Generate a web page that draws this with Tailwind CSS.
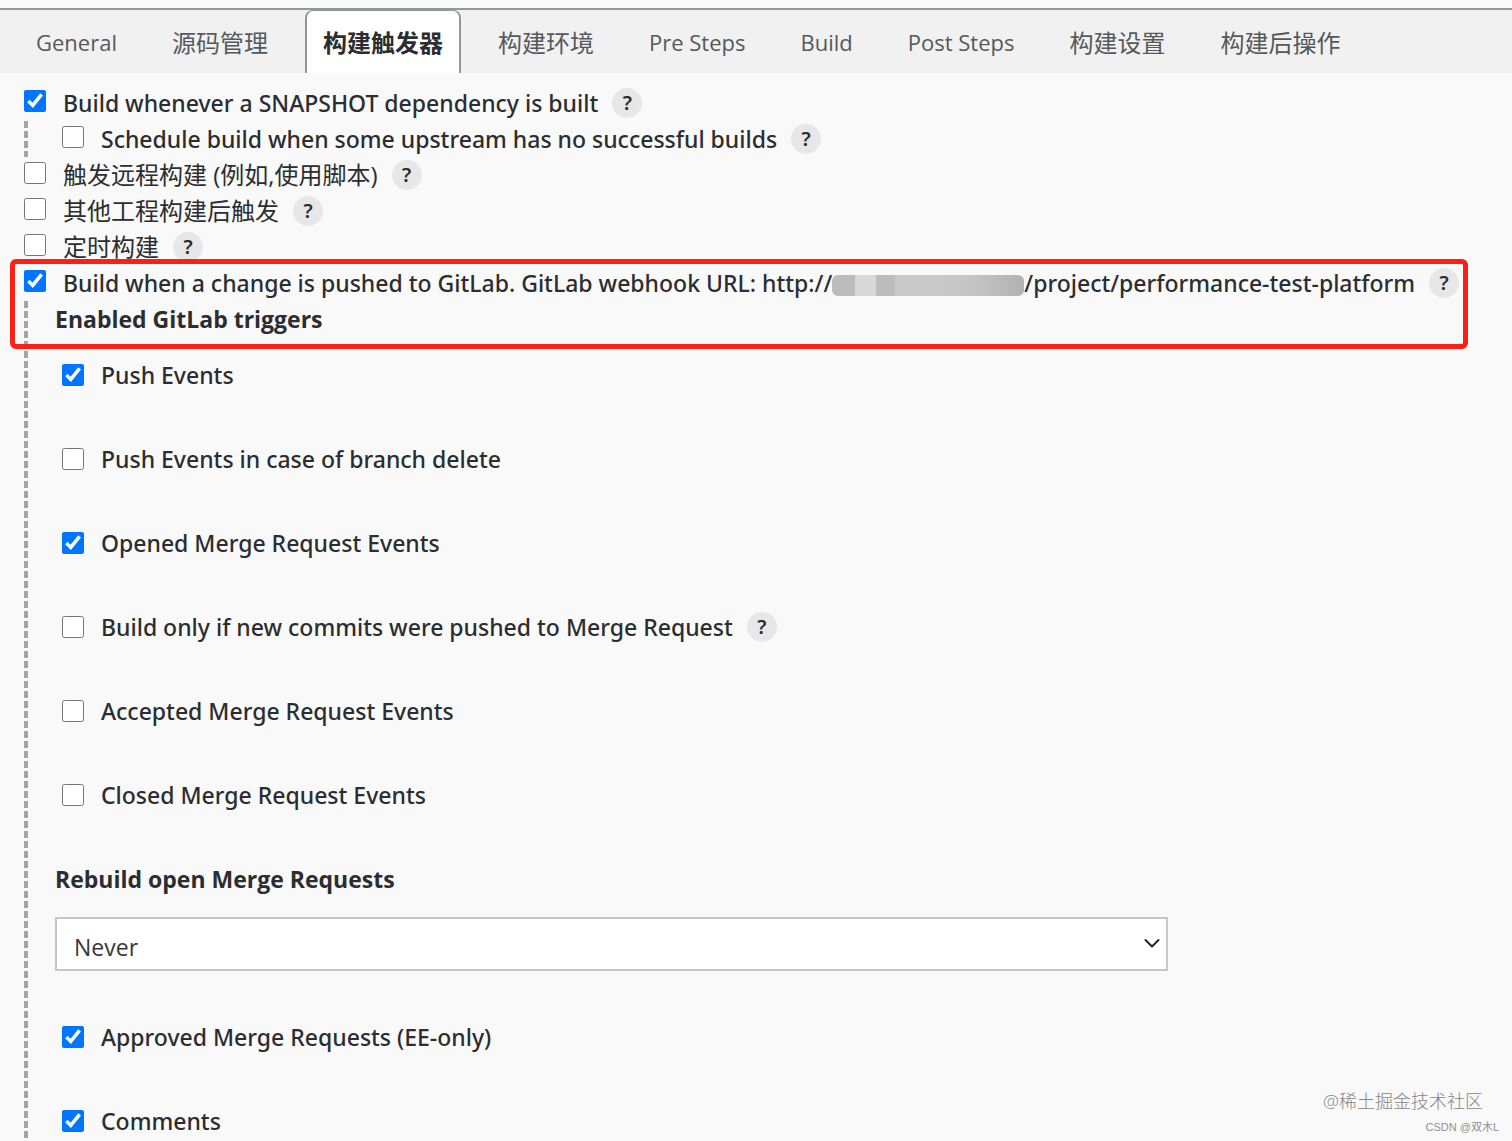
<!DOCTYPE html>
<html lang="zh-CN">
<head>
<meta charset="utf-8">
<meta name="viewport" content="width=device-width, initial-scale=1">
<title>构建触发器</title>
<script src="https://cdn.jsdelivr.net/npm/@tailwindcss/browser@4"></script>
</head>
<body class="relative min-h-screen overflow-x-hidden bg-[#f9f9f9] font-['Noto_Sans','Noto_Sans_CJK_SC',sans-serif] text-[23px] leading-9 font-medium text-[#2b2d30]">
<nav class="mt-2 flex h-[65px] items-stretch gap-[19px] border-t-2 border-[#94979a] bg-[#f1f1f2] pl-[18px] font-['Open_Sans','Noto_Sans_CJK_SC',sans-serif] text-[24px] font-normal whitespace-nowrap text-[#55595c]">
  <a href="#" class="flex items-center px-[18px] text-[22px]">General</a>
  <a href="#" class="flex items-center px-[18px] pt-[2px]">源码管理</a>
  <a href="#" aria-current="page" class="flex items-center rounded-t-lg border-x-2 border-t border-[#94979a] bg-white px-4 pt-px font-bold text-[#2b2d30]">构建触发器</a>
  <a href="#" class="flex items-center px-[18px] pt-[2px]">构建环境</a>
  <a href="#" class="flex items-center px-[18px] text-[22px]">Pre Steps</a>
  <a href="#" class="flex items-center px-[18px] text-[22px]">Build</a>
  <a href="#" class="flex items-center px-[18px] text-[22px]">Post Steps</a>
  <a href="#" class="flex items-center px-[18px] pt-[2px]">构建设置</a>
  <a href="#" class="flex items-center px-[18px] pt-[2px]">构建后操作</a>
</nav>

<form class="px-6 pt-3 whitespace-nowrap">
  <div class="flex h-9 items-center">
    <input id="snapshot" type="checkbox" checked class="mr-[17px] mb-1 size-[22px] accent-[#0075ff]">
    <label for="snapshot">Build whenever a SNAPSHOT dependency is built</label>
    <button type="button" class="ml-[14px] size-[30px] rounded-full bg-[#e7e7e7] text-[20px] leading-none font-semibold">?</button>
  </div>
  <div class="flex h-9 items-center">
    <span class="mr-[34px] h-9 w-1 bg-[repeating-linear-gradient(#a5a5a5_0_7px,transparent_7px_10px)]"></span>
    <input id="schedule" type="checkbox" class="mr-[17px] mb-1 size-[22px] accent-[#0075ff]">
    <label for="schedule">Schedule build when some upstream has no successful builds</label>
    <button type="button" class="ml-[14px] size-[30px] rounded-full bg-[#e7e7e7] text-[20px] leading-none font-semibold">?</button>
  </div>
  <div class="flex h-9 items-center">
    <input id="remote" type="checkbox" class="mr-[17px] mb-1 size-[22px] accent-[#0075ff]">
    <label for="remote" class="font-['Open_Sans','Noto_Sans_CJK_SC',sans-serif] text-[24px] font-normal">触发远程构建 (例如,使用脚本)</label>
    <button type="button" class="ml-[14px] size-[30px] rounded-full bg-[#e7e7e7] text-[20px] leading-none font-semibold">?</button>
  </div>
  <div class="flex h-9 items-center">
    <input id="after" type="checkbox" class="mr-[17px] mb-1 size-[22px] accent-[#0075ff]">
    <label for="after" class="font-['Open_Sans','Noto_Sans_CJK_SC',sans-serif] text-[24px] font-normal">其他工程构建后触发</label>
    <button type="button" class="ml-[14px] size-[30px] rounded-full bg-[#e7e7e7] text-[20px] leading-none font-semibold">?</button>
  </div>
  <div class="flex h-9 items-center">
    <input id="timer" type="checkbox" class="mr-[17px] mb-1 size-[22px] accent-[#0075ff]">
    <label for="timer" class="font-['Open_Sans','Noto_Sans_CJK_SC',sans-serif] text-[24px] font-normal">定时构建</label>
    <button type="button" class="ml-[14px] size-[30px] rounded-full bg-[#e7e7e7] text-[20px] leading-none font-semibold">?</button>
  </div>

  <section class="relative">
    <div class="pointer-events-none absolute -top-[6px] -left-[14px] h-[90px] w-[1458px] rounded-md border-[5px] border-[#fb2015]"></div>
    <div class="flex h-9 items-center">
      <input id="gitlab" type="checkbox" checked class="mr-[17px] mb-1 size-[22px] accent-[#0075ff]">
      <label for="gitlab" class="flex items-center">Build when a change is pushed to GitLab. GitLab webhook URL: http://<span class="mt-1 h-[21px] w-48 rounded-md bg-[linear-gradient(90deg,#bcbcbc_0_12%,#d8d8d8_12%_23%,#bcbcbc_23%_33%,#c9c9c9_33%_55%,#c4c4c4_75%,#b2b2b2)]"></span>/project/performance-test-platform</label>
      <button type="button" class="ml-[14px] size-[30px] rounded-full bg-[#e7e7e7] text-[20px] leading-none font-semibold">?</button>
    </div>
    <div class="flex">
      <span class="mr-[27px] w-1 bg-[repeating-linear-gradient(#a5a5a5_0_7px,transparent_7px_10px)]"></span>
      <div class="flex min-w-0 flex-1 flex-col">
        <h2 class="font-['Open_Sans',sans-serif] font-bold">Enabled GitLab triggers</h2>
        <div class="mt-5 flex flex-col gap-12 pl-[7px]">
          <div class="flex h-9 items-center">
            <input id="push" type="checkbox" checked class="mr-[17px] size-[22px] accent-[#0075ff]">
            <label for="push">Push Events</label>
          </div>
          <div class="flex h-9 items-center">
            <input id="delete" type="checkbox" class="mr-[17px] size-[22px] accent-[#0075ff]">
            <label for="delete">Push Events in case of branch delete</label>
          </div>
          <div class="flex h-9 items-center">
            <input id="opened" type="checkbox" checked class="mr-[17px] size-[22px] accent-[#0075ff]">
            <label for="opened">Opened Merge Request Events</label>
          </div>
          <div class="flex h-9 items-center">
            <input id="commits" type="checkbox" class="mr-[17px] size-[22px] accent-[#0075ff]">
            <label for="commits">Build only if new commits were pushed to Merge Request</label>
            <button type="button" class="ml-[14px] size-[30px] rounded-full bg-[#e7e7e7] text-[20px] leading-none font-semibold">?</button>
          </div>
          <div class="flex h-9 items-center">
            <input id="accepted" type="checkbox" class="mr-[17px] size-[22px] accent-[#0075ff]">
            <label for="accepted">Accepted Merge Request Events</label>
          </div>
          <div class="flex h-9 items-center">
            <input id="closed" type="checkbox" class="mr-[17px] size-[22px] accent-[#0075ff]">
            <label for="closed">Closed Merge Request Events</label>
          </div>
        </div>
        <label for="rebuild" class="mt-12 font-['Open_Sans',sans-serif] font-bold">Rebuild open Merge Requests</label>
        <div class="relative mt-5 max-w-[1113px]">
          <select id="rebuild" class="h-[54px] w-full appearance-none border-2 border-[#c3c7ca] bg-white pt-[6px] pl-[17px] font-['Open_Sans',sans-serif] font-normal text-[#36393c]">
            <option>Never</option>
          </select>
          <svg class="pointer-events-none absolute top-5 right-2 h-3 w-4" viewBox="0 0 16 12" fill="none" stroke="#222" stroke-width="2" stroke-linecap="round" stroke-linejoin="round"><path d="M1.5 3 8 9.500 14.500 3"/></svg>
        </div>
        <div class="mt-12 flex flex-col gap-12 pl-[7px]">
          <div class="flex h-9 items-center">
            <input id="approved" type="checkbox" checked class="mr-[17px] size-[22px] accent-[#0075ff]">
            <label for="approved">Approved Merge Requests (EE-only)</label>
          </div>
          <div class="flex h-9 items-center">
            <input id="comments" type="checkbox" checked class="mr-[17px] size-[22px] accent-[#0075ff]">
            <label for="comments">Comments</label>
          </div>
        </div>
      </div>
    </div>
  </section>
</form>
<p class="absolute right-[29px] bottom-[26px] font-['Open_Sans','Noto_Sans_CJK_SC',sans-serif] text-[18px] leading-7 font-light text-[#858585]">@稀土掘金技术社区</p>
<p class="absolute right-[13px] bottom-1 font-['Liberation_Sans','Noto_Sans_CJK_SC',sans-serif] text-[11px] leading-5 font-normal text-[#909090]">CSDN @双木L</p>
</body>
</html>
